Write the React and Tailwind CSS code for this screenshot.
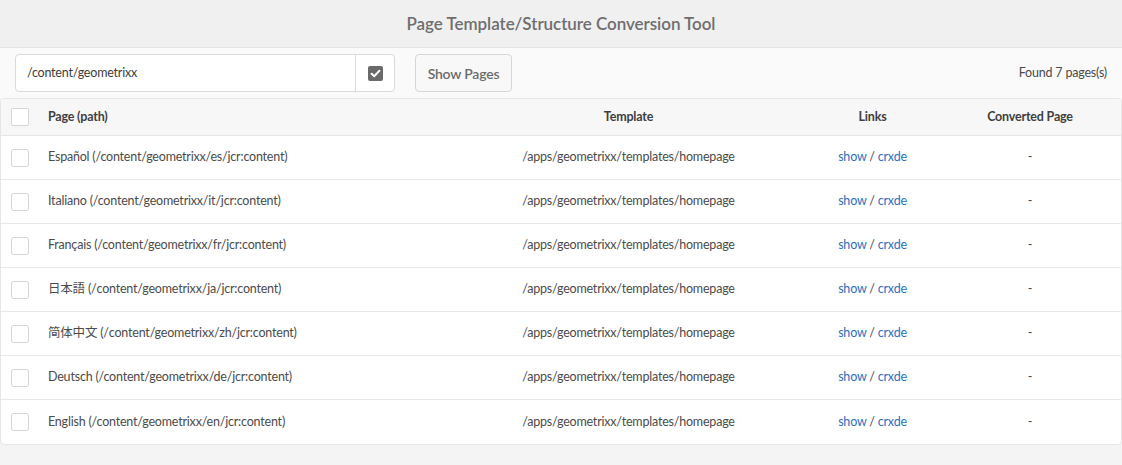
import React from "react";

const rows = [
  ["Español", "es"],
  ["Italiano", "it"],
  ["Français", "fr"],
  ["日本語", "ja"],
  ["简体中文", "zh"],
  ["Deutsch", "de"],
  ["English", "en"],
];

const font = { fontFamily: 'Lato, "Noto Sans CJK JP", "Noto Sans CJK SC", sans-serif' };

function Box() {
  return <div className="w-[18px] h-[18px] border border-[#d6d6d6] bg-white rounded-[2px]" />;
}

export default function App() {
  return (
    <div className="w-[1122px] h-[465px] bg-[#f4f4f4] text-[#4b4b4b] tracking-[-0.2px]" style={font}>
      <div className="h-[48px] flex items-center justify-center border-b border-[#e4e4e4] bg-[#f0f0f0]">
        <span className="text-[17px] font-semibold text-[#6e6e6e] tracking-[-0.05px]">Page Template/Structure Conversion Tool</span>
      </div>
      <div className="h-[50px] flex items-center px-[15px] bg-[#fafafa]">
        <div className="flex h-[38px] w-[380px] border border-[#dadada] rounded-[4px] bg-white">
          <div className="flex-1 flex items-center pl-[11px] text-[12.5px] text-[#3c3c3c]">/content/geometrixx</div>
          <div className="w-[39px] border-l border-[#dadada] flex items-center justify-center">
            <svg width="15" height="15" viewBox="0 0 15 15">
              <rect x="0" y="0" width="15" height="15" rx="2" fill="#6a6a6a" />
              <path d="M3.6 7.8 L6.2 10.3 L11.4 4.8" stroke="#fff" strokeWidth="2" fill="none" strokeLinecap="round" strokeLinejoin="round" />
            </svg>
          </div>
        </div>
        <button className="ml-[20px] h-[38px] w-[97px] border border-[#d6d6d6] rounded-[4px] bg-[#f8f8f8] text-[14px] font-semibold text-[#6b6b6b]">Show Pages</button>
        <div className="ml-auto text-[12.5px] text-[#4b4b4b]">Found 7 pages(s)</div>
      </div>
      <div className="bg-white border border-[#e6e6e6] rounded-[4px] overflow-hidden">
        <div className="flex h-[37px] items-center bg-[#f7f7f7] border-b border-[#e6e6e6] text-[12.5px] font-bold text-[#3f3f3f]">
          <div className="w-[38px] pl-[10px] flex items-center"><Box /></div>
          <div className="w-[412px] pl-[9px]">Page (path)</div>
          <div className="w-[355px] text-center">Template</div>
          <div className="w-[133px] text-center">Links</div>
          <div className="flex-1 text-center">Converted Page</div>
        </div>
        {rows.map(([name, code], i) => (
          <div key={code} className={"flex h-[44px] items-center text-[12.5px] " + (i < rows.length - 1 ? "border-b border-[#e8e8e8]" : "")}>
            <div className="w-[38px] pl-[10px] flex items-center"><Box /></div>
            <div className="w-[412px] pl-[9px]">{name} (/content/geometrixx/{code}/jcr:content)</div>
            <div className="w-[355px] text-center">/apps/geometrixx/templates/homepage</div>
            <div className="w-[133px] text-center">
              <span className="text-[#2d6fc0]">show</span> / <span className="text-[#2d6fc0]">crxde</span>
            </div>
            <div className="flex-1 text-center">-</div>
          </div>
        ))}
      </div>
    </div>
  );
}
